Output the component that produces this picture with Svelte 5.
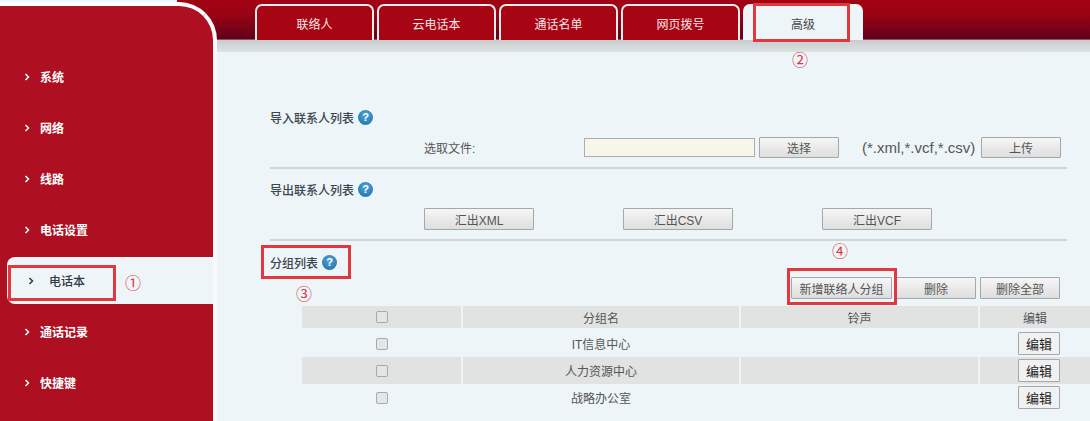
<script>
  const menu = ['系统', '网络', '线路', '电话设置', '电话本', '通话记录', '快捷键'];
  const activeMenu = '电话本';
  const tabs = ['联络人', '云电话本', '通话名单', '网页拨号', '高级'];
  const groups = ['IT信息中心', '人力资源中心', '战略办公室'];
</script>

<div class="page">
  <aside class="sidebar">
    <nav>
      {#each menu as item}
        <div class="item" class:active={item === activeMenu}>
          <svg class="chevron" viewBox="0 0 6 8" width="6" height="8">
            <path d="M1.5 1 L4.5 4 L1.5 7" fill="none" stroke="currentColor" stroke-width="1.5" />
          </svg>
          <span>{item}</span>
        </div>
      {/each}
    </nav>
  </aside>

  <div class="right">
    <header class="tabs">
      {#each tabs as tab, i}
        <div class="tab" class:current={i === tabs.length - 1}>{tab}</div>
      {/each}
    </header>
    <div class="band"></div>

    <main class="content">
      <section class="import">
        <h3>导入联系人列表 <span class="help">?</span></h3>
        <div class="row file-row">
          <label for="file">选取文件:</label>
          <input id="file" type="text" />
          <button class="pick">选择</button>
          <span class="ext">(*.xml,*.vcf,*.csv)</span>
          <button class="pick">上传</button>
        </div>
      </section>

      <section class="export">
        <h3>导出联系人列表 <span class="help">?</span></h3>
        <div class="row export-row">
          <button>汇出XML</button>
          <button>汇出CSV</button>
          <button>汇出VCF</button>
        </div>
      </section>

      <section class="groups">
        <h3>分组列表 <span class="help">?</span></h3>
        <div class="row actions">
          <button class="add">新增联络人分组</button>
          <button>删除</button>
          <button>删除全部</button>
        </div>
        <div class="table">
          <div class="tr head">
            <div class="check"><input type="checkbox" /></div>
            <div>分组名</div>
            <div>铃声</div>
            <div>编辑</div>
          </div>
          {#each groups as group, i}
            <div class="tr" class:odd={i % 2 === 1}>
              <div class="check"><input type="checkbox" /></div>
              <div>{group}</div>
              <div></div>
              <div class="edit"><button>编辑</button></div>
            </div>
          {/each}
        </div>
      </section>
    </main>
  </div>

  <!-- red tutorial marks laid over the screenshot -->
  <div class="mark" style="left:8px;top:265px;width:108px;height:36px"></div>
  <div class="mark" style="left:753px;top:3px;width:97px;height:39px"></div>
  <div class="mark" style="left:261px;top:245px;width:90px;height:34px"></div>
  <div class="mark" style="left:787px;top:268px;width:110px;height:37px"></div>
  <span class="num" style="left:125px;top:275px">①</span>
  <span class="num" style="left:792px;top:52px">②</span>
  <span class="num" style="left:296px;top:286px">③</span>
  <span class="num" style="left:832px;top:243px">④</span>
</div>

<style>
  :global(body) {
    margin: 0;
    overflow: hidden;
  }

  .page {
    position: relative;
    display: flex;
    width: 1090px;
    height: 421px;
    overflow: hidden;
    background: #eef5f9;
    font-family: "Liberation Sans", "Noto Sans CJK SC", sans-serif;
    font-size: 12px;
    color: #444;
  }

  .sidebar {
    flex: none;
    width: 213px;
    height: 421px;
    margin-top: 2px;
    background: #ae0f21;
    border-top: 4px solid #fff;
    border-right: 4px solid #f6fafb;
    border-top-right-radius: 38px;
    position: relative;
    z-index: 1;
  }

  nav {
    padding-top: 45px;
  }

  .item {
    display: flex;
    align-items: center;
    gap: 10px;
    height: 51px;
    padding-left: 24px;
    box-sizing: border-box;
    color: #fff;
    font-weight: 700;
  }

  .item.active {
    position: relative;
    width: 206px;
    height: 47px;
    margin: 2px 0 2px 7px;
    padding-left: 21px;
    gap: 15px;
    background: #eef5f9;
    border-radius: 8px 0 0 8px;
    color: #2f3a44;
    font-weight: 500;
  }

  /* pulled left so the bar shows through the sidebar's round corner */
  .right {
    flex: 1;
    min-width: 0;
    margin-left: -40px;
    display: flex;
    flex-direction: column;
  }

  .tabs {
    display: flex;
    gap: 3px;
    height: 40px;
    padding-left: 78px;
    align-items: flex-end;
    background: linear-gradient(to bottom, #a10314 0, #9c0314 35%, #5f0119 97%, #b9868e 100%);
  }

  .tab {
    box-sizing: border-box;
    width: 119px;
    height: 36px;
    padding-top: 9px;
    text-align: center;
    color: #f7e6e6;
    background: #a70513;
    border: 2px solid #f3ecec;
    border-bottom: 0;
    border-radius: 7px 7px 0 0;
  }

  .tab.current {
    width: 120px;
    color: #444;
    background: #eef5f9;
    border-color: #eef5f9;
  }

  .band {
    height: 12px;
    background: linear-gradient(to bottom, #c8cccc, #dce1e2);
  }

  .content {
    padding-left: 93px;
  }

  section {
    margin-right: 23px;
  }

  h3 {
    margin: 0;
    display: flex;
    align-items: center;
    gap: 4px;
    height: 20px;
    font-size: 12px;
    font-weight: 500;
    color: #3b4650;
  }

  .help {
    width: 15px;
    height: 15px;
    border-radius: 50%;
    background: radial-gradient(circle at 50% 35%, #4ea3d6, #1c6ea8);
    color: #fff;
    font-size: 11px;
    font-weight: 700;
    line-height: 15px;
    text-align: center;
  }

  .import {
    padding-top: 55px;
    height: 60px;
    border-bottom: 2px solid #d0d4d5;
  }

  .export {
    padding-top: 10px;
    height: 60px;
    border-bottom: 2px solid #d0d4d5;
  }

  .groups {
    padding-top: 11px;
    margin-right: 0;
  }

  .row {
    display: flex;
    align-items: center;
  }

  button {
    box-sizing: border-box;
    height: 22px;
    padding: 0;
    font: inherit;
    color: #555;
    background: linear-gradient(to bottom, #f6f6f6, #dedede);
    border: 1px solid #a4a8aa;
    border-radius: 1px;
  }

  .file-row {
    margin-top: 9px;
    height: 22px;
  }

  label {
    margin-left: 154px;
    width: 160px;
    color: #555;
  }

  #file {
    box-sizing: border-box;
    width: 171px;
    height: 19px;
    padding: 0;
    margin-right: 4px;
    background: #f7f6e8;
    border: 1px solid #a9aeae;
  }

  .pick {
    width: 80px;
    height: 21px;
  }

  .ext {
    width: 119px;
    margin-left: 23px;
    white-space: nowrap;
    color: #555;
    font-size: 15px;
  }

  .export-row {
    gap: 89px;
    margin: 9px 0 0 154px;
  }

  .export-row button {
    width: 110px;
  }

  .actions {
    gap: 4px;
    margin: 5px 0 7px 521px;
  }

  .actions button {
    width: 80px;
  }

  .actions .add {
    width: 101px;
  }

  .table {
    margin-left: 32px;
  }

  .tr {
    display: grid;
    grid-template-columns: 159px 276px 237px 110px;
    column-gap: 2px;
    height: 27px;
    color: #555;
    text-align: center;
  }

  .tr > div {
    display: flex;
    align-items: center;
    justify-content: center;
  }

  .tr.head {
    height: 22px;
    margin-bottom: 2px;
  }

  .tr.head > div,
  .tr.odd > div {
    background: #e1e2e2;
  }

  .tr input {
    appearance: none;
    box-sizing: border-box;
    width: 12px;
    height: 12px;
    margin: 0;
    background: #e3e6e7;
    border: 1px solid #a9a9a9;
    border-radius: 2px;
  }

  .tr > .edit {
    justify-content: flex-start;
    padding-left: 38px;
  }

  .edit button {
    width: 42px;
    height: 23px;
    color: #222;
    font-size: 13px;
    background: #f1f1f1;
  }

  .mark {
    position: absolute;
    z-index: 2;
    box-sizing: border-box;
    border: 3px solid #e0383e;
  }

  .num {
    position: absolute;
    z-index: 2;
    font-size: 16px;
    line-height: 18px;
    color: #d8353c;
  }
</style>
